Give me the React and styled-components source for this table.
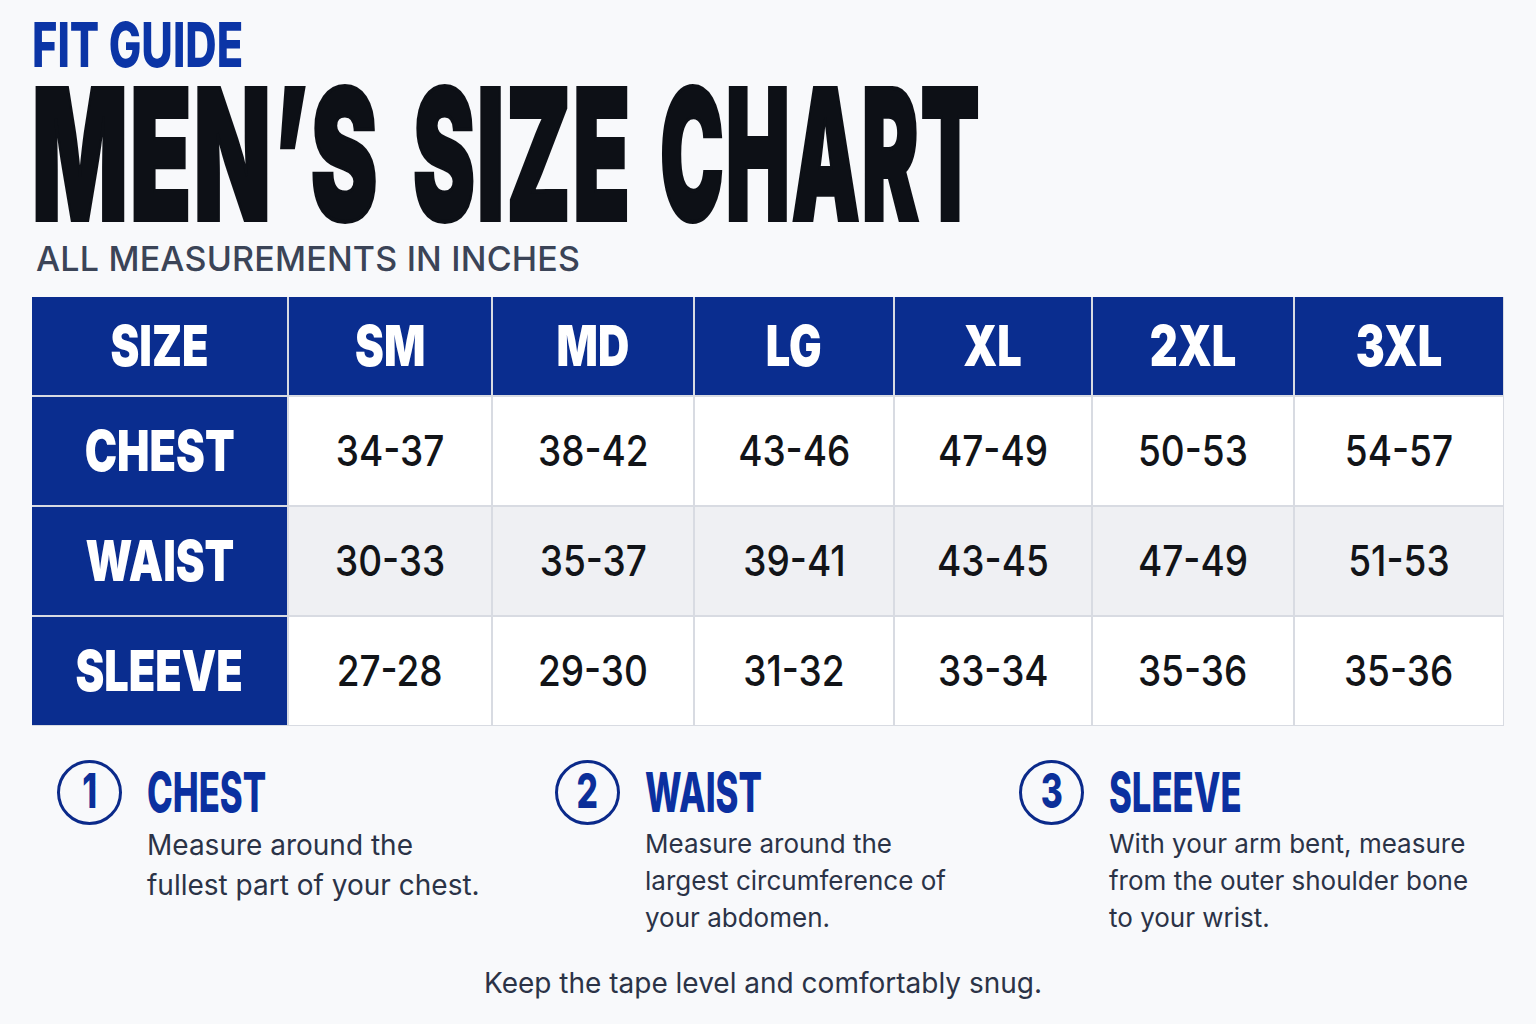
import React from 'react'
import styled, { createGlobalStyle } from 'styled-components'

const BLUE = '#0a2d8f'
const INK = '#0d1016'
const BODY = '#2b3347'
const sans = "Inter, 'Noto Sans', sans-serif"

const GlobalStyle = createGlobalStyle`
  html, body {
    margin: 0;
    padding: 0;
    background: #f8f9fb;
    overflow: hidden;
  }
  body {
    font-family: ${sans};
  }
`

const titleWords = [
  { text: 'MEN’S', w: 346, x: 0.551 },
  { text: 'SIZE', w: 212, x: 0.512 },
  { text: 'CHART', w: 317, x: 0.47 },
]

const sizes = ['SM', 'MD', 'LG', 'XL', '2XL', '3XL']

const rows = [
  { label: 'CHEST', values: ['34-37', '38-42', '43-46', '47-49', '50-53', '54-57'] },
  { label: 'WAIST', values: ['30-33', '35-37', '39-41', '43-45', '47-49', '51-53'], shaded: true },
  { label: 'SLEEVE', values: ['27-28', '29-30', '31-32', '33-34', '35-36', '35-36'] },
]

// the first note is set a little larger in the layout
const steps = [
  {
    n: '1',
    title: 'CHEST',
    lines: ['Measure around the', 'fullest part of your chest.'],
    large: true,
  },
  {
    n: '2',
    title: 'WAIST',
    lines: ['Measure around the', 'largest circumference of', 'your abdomen.'],
  },
  {
    n: '3',
    title: 'SLEEVE',
    lines: ['With your arm bent, measure', 'from the outer shoulder bone', 'to your wrist.'],
  },
]

function App() {
  return (
    <Page>
      <GlobalStyle />
      <Kicker>
        <Squeeze $x={0.7}>FIT GUIDE</Squeeze>
      </Kicker>
      <Title>
        {titleWords.map(word => (
          <TitleWord key={word.text} $w={word.w}>
            <Squeeze $x={word.x}>{word.text}</Squeeze>
          </TitleWord>
        ))}
      </Title>
      <Subtitle>ALL MEASUREMENTS IN INCHES</Subtitle>

      <Table>
        <Cell $kind="head">
          <HeadText>SIZE</HeadText>
        </Cell>
        {sizes.map(s => (
          <Cell key={s} $kind="head">
            <HeadText>{s}</HeadText>
          </Cell>
        ))}
        {rows.map(row => (
          <React.Fragment key={row.label}>
            <Cell $kind="label">
              <HeadText>{row.label}</HeadText>
            </Cell>
            {row.values.map((v, i) => (
              <Cell key={i} $kind="data" $shaded={row.shaded}>
                <Value>{v}</Value>
              </Cell>
            ))}
          </React.Fragment>
        ))}
      </Table>

      <Steps>
        {steps.map(step => (
          <Step key={step.n}>
            <Badge>
              <BadgeNum>{step.n}</BadgeNum>
            </Badge>
            <StepTitle>
              <Squeeze $x={0.63}>{step.title}</Squeeze>
            </StepTitle>
            <StepText $large={step.large}>
              {step.lines.map(l => (
                <div key={l}>{l}</div>
              ))}
            </StepText>
          </Step>
        ))}
      </Steps>

      <Footnote>Keep the tape level and comfortably snug.</Footnote>
    </Page>
  )
}

const Page = styled.div`
  box-sizing: border-box;
  width: 1536px;
  height: 1024px;
  padding: 14px 32px 0 32px;
  overflow: hidden;
`

const Squeeze = styled.span`
  display: inline-block;
  white-space: nowrap;
  transform: scaleX(${({ $x }) => $x});
  transform-origin: left center;
`

const Kicker = styled.div`
  font-family: ${sans};
  font-weight: 800;
  font-size: 62px;
  line-height: 1;
  color: #0b35a6;
  white-space: nowrap;
`

const Title = styled.h1`
  display: flex;
  gap: 35px;
  margin: 6px 0 0;
  font-family: ${sans};
  font-weight: 900;
  font-size: 182px;
  line-height: 0.8;
  letter-spacing: 4px;
  color: ${INK};
  white-space: nowrap;
  -webkit-text-stroke: 4px ${INK};
`

const TitleWord = styled.span`
  flex: none;
  width: ${({ $w }) => $w}px;
`

const Subtitle = styled.div`
  margin: 14px 0 0 4px;
  font-family: ${sans};
  font-weight: 500;
  font-size: 34px;
  line-height: 1;
  letter-spacing: 0.2px;
  color: #3b4457;
`

const Table = styled.div`
  display: grid;
  grid-template-columns: 255px 202px 200px 198px 196px 200px 208px;
  grid-template-rows: 98px repeat(3, 108px);
  gap: 2px;
  width: max-content;
  margin-top: 21px;
  background: #d8dbe2;
  border-right: 1px solid #d8dbe2;
  border-bottom: 1px solid #d8dbe2;
`

const Cell = styled.div`
  display: flex;
  align-items: center;
  justify-content: center;
  background: ${({ $kind, $shaded }) =>
    $kind === 'data' ? ($shaded ? '#eff0f3' : '#ffffff') : BLUE};
`

const HeadText = styled.span`
  display: inline-block;
  white-space: nowrap;
  font-family: ${sans};
  font-weight: 900;
  font-size: 57px;
  line-height: 1;
  color: #ffffff;
  transform: scaleX(0.76);
`

const Value = styled.span`
  display: inline-block;
  white-space: nowrap;
  font-family: ${sans};
  font-weight: 500;
  font-size: 43px;
  line-height: 1;
  color: #121418;
  transform: scaleX(0.86);
`

const Steps = styled.div`
  display: grid;
  grid-template-columns: 498px 464px 1fr;
  margin: 34px 0 0 25px;
`

const Step = styled.div`
  display: grid;
  grid-template-columns: 65px 1fr;
  column-gap: 25px;
  align-items: center;
  align-content: start;
`

const Badge = styled.div`
  box-sizing: border-box;
  width: 65px;
  height: 65px;
  border: 3px solid #0b2a8a;
  border-radius: 50%;
  display: flex;
  align-items: center;
  justify-content: center;
`

const BadgeNum = styled.span`
  display: inline-block;
  font-family: ${sans};
  font-weight: 800;
  font-size: 48px;
  line-height: 1;
  color: #0b2f99;
  transform: scaleX(0.7) translateY(-1px);
`

const StepTitle = styled.div`
  font-family: ${sans};
  font-weight: 800;
  font-size: 55px;
  line-height: 1;
  color: #0b30a0;
  white-space: nowrap;
`

const StepText = styled.div`
  grid-column: 2;
  font-family: ${sans};
  font-weight: 400;
  font-size: ${({ $large }) => ($large ? '28px' : '26px')};
  line-height: ${({ $large }) => ($large ? '40px' : '37px')};
  color: ${BODY};
  white-space: nowrap;
`

const Footnote = styled.div`
  margin-top: 33px;
  padding-right: 10px;
  text-align: center;
  font-family: ${sans};
  font-weight: 400;
  font-size: 28px;
  line-height: 1;
  color: ${BODY};
`

export default App
